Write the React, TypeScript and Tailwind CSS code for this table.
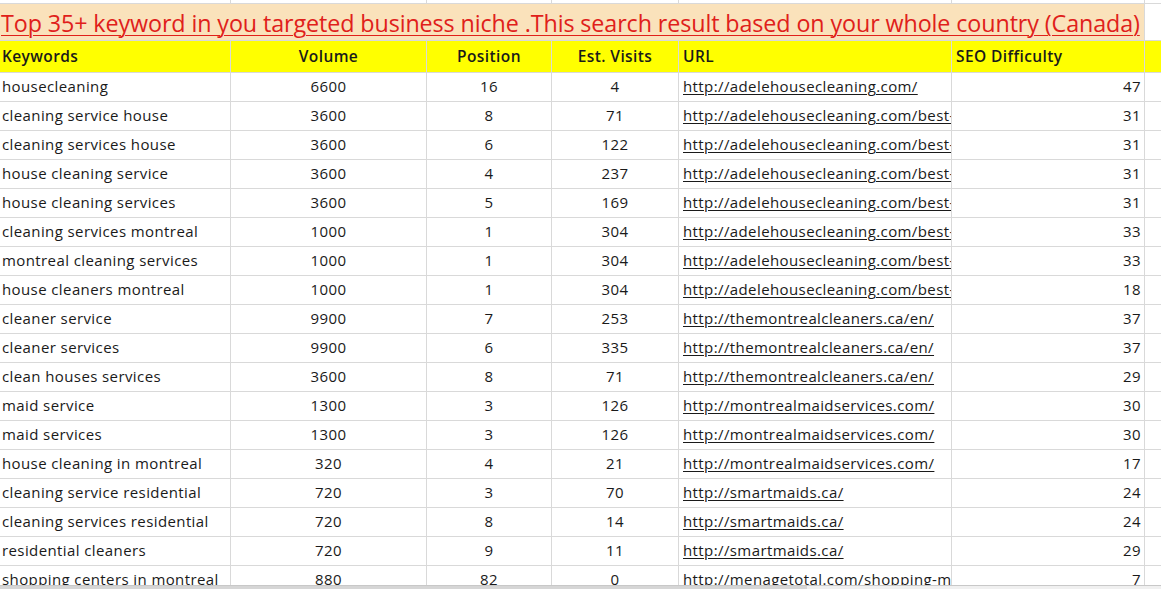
import React from "react";

type Row = [string, string, string, string, string, string];

const rows: Row[] = [
  ["housecleaning", "6600", "16", "4", "http://adelehousecleaning.com/", "47"],
  ["cleaning service house", "3600", "8", "71", "http://adelehousecleaning.com/best-house-cleaning", "31"],
  ["cleaning services house", "3600", "6", "122", "http://adelehousecleaning.com/best-house-cleaning", "31"],
  ["house cleaning service", "3600", "4", "237", "http://adelehousecleaning.com/best-house-cleaning", "31"],
  ["house cleaning services", "3600", "5", "169", "http://adelehousecleaning.com/best-house-cleaning", "31"],
  ["cleaning services montreal", "1000", "1", "304", "http://adelehousecleaning.com/best-house-cleaning", "33"],
  ["montreal cleaning services", "1000", "1", "304", "http://adelehousecleaning.com/best-house-cleaning", "33"],
  ["house cleaners montreal", "1000", "1", "304", "http://adelehousecleaning.com/best-house-cleaning", "18"],
  ["cleaner service", "9900", "7", "253", "http://themontrealcleaners.ca/en/", "37"],
  ["cleaner services", "9900", "6", "335", "http://themontrealcleaners.ca/en/", "37"],
  ["clean houses services", "3600", "8", "71", "http://themontrealcleaners.ca/en/", "29"],
  ["maid service", "1300", "3", "126", "http://montrealmaidservices.com/", "30"],
  ["maid services", "1300", "3", "126", "http://montrealmaidservices.com/", "30"],
  ["house cleaning in montreal", "320", "4", "21", "http://montrealmaidservices.com/", "17"],
  ["cleaning service residential", "720", "3", "70", "http://smartmaids.ca/", "24"],
  ["cleaning services residential", "720", "8", "14", "http://smartmaids.ca/", "24"],
  ["residential cleaners", "720", "9", "11", "http://smartmaids.ca/", "29"],
  ["shopping centers in montreal", "880", "82", "0", "http://menagetotal.com/shopping-malls-montreal", "7"],
];

const W = ["w-[231px]", "w-[196px]", "w-[125px]", "w-[127px]", "w-[273px]", "w-[193px]"];
const line = "border-r border-[#d9d9d9]";

export default function App() {
  return (
    <div
      className="w-[1161px] h-[589px] overflow-hidden bg-white text-[#1a1a1a] relative"
      style={{ fontFamily: "'Open Sans', Lato, sans-serif" }}
    >
      {/* previous row sliver */}
      <div className="flex h-[4px] border-b border-[#d9d9d9]">
        {W.map((w, i) => (
          <div key={i} className={`${w} ${line} shrink-0`} />
        ))}
        <div className="flex-1" />
      </div>

      {/* title row */}
      <div className="flex h-[37px] border-b border-[#d9d9d9]">
        <div className={`w-[1145px] shrink-0 bg-[#fae2bb] ${line} flex items-end pl-[1px] pb-[3px] overflow-hidden`}>
          <span className="text-[23.3px] leading-[28px] tracking-[-0.1px] text-[#e0201a] underline decoration-1 underline-offset-[3px] whitespace-nowrap">
            Top 35+ keyword in you targeted business niche .This search result based on your whole country (Canada)
          </span>
        </div>
        <div className="flex-1" />
      </div>

      {/* header row */}
      <div className="flex h-[32px] bg-[#ffff00] border-b border-[#d9d9d9] font-semibold text-[15.5px] tracking-[0.4px]">
        <div className={`${W[0]} ${line} shrink-0 flex items-end pb-[4px] pl-[2px]`}>Keywords</div>
        <div className={`${W[1]} ${line} shrink-0 flex items-end justify-center pb-[4px]`}>Volume</div>
        <div className={`${W[2]} ${line} shrink-0 flex items-end justify-center pb-[4px]`}>Position</div>
        <div className={`${W[3]} ${line} shrink-0 flex items-end justify-center pb-[4px]`}>Est. Visits</div>
        <div className={`${W[4]} ${line} shrink-0 flex items-end pb-[4px] pl-[4px]`}>URL</div>
        <div className={`${W[5]} ${line} shrink-0 flex items-end pb-[4px] pl-[4px]`}>SEO Difficulty</div>
        <div className="flex-1" />
      </div>

      {rows.map((r, idx) => {
        const last = idx === rows.length - 1;
        return (
          <div key={idx} className="flex h-[29px] border-b border-[#d9d9d9] text-[15px] tracking-[0.4px]">
            <div className={`${W[0]} ${line} shrink-0 flex items-end pb-[4px] pl-[2px] whitespace-nowrap overflow-hidden`}>
              {r[0]}
            </div>
            <div className={`${W[1]} ${line} shrink-0 flex items-end justify-center pb-[4px]`}>{r[1]}</div>
            <div className={`${W[2]} ${line} shrink-0 flex items-end justify-center pb-[4px]`}>{r[2]}</div>
            <div className={`${W[3]} ${line} shrink-0 flex items-end justify-center pb-[4px]`}>{r[3]}</div>
            <div className={`${W[4]} ${line} shrink-0 flex items-end pb-[4px] pl-[4px] whitespace-nowrap overflow-hidden`}>
              <span className={last ? "" : "underline decoration-1 underline-offset-[2px]"}>{r[4]}</span>
            </div>
            <div className={`${W[5]} ${line} shrink-0 flex items-end justify-end pb-[4px] pr-[3px]`}>{r[5]}</div>
            <div className="flex-1" />
          </div>
        );
      })}

      {/* bottom scrollbar strip */}
      <div className="absolute left-0 right-0 bottom-0 h-[4px] bg-[#f0f0f0] border-t border-[#c8c8c8]">
        <div className="h-full w-[807px] bg-[#d6d6d6]" />
      </div>
    </div>
  );
}
